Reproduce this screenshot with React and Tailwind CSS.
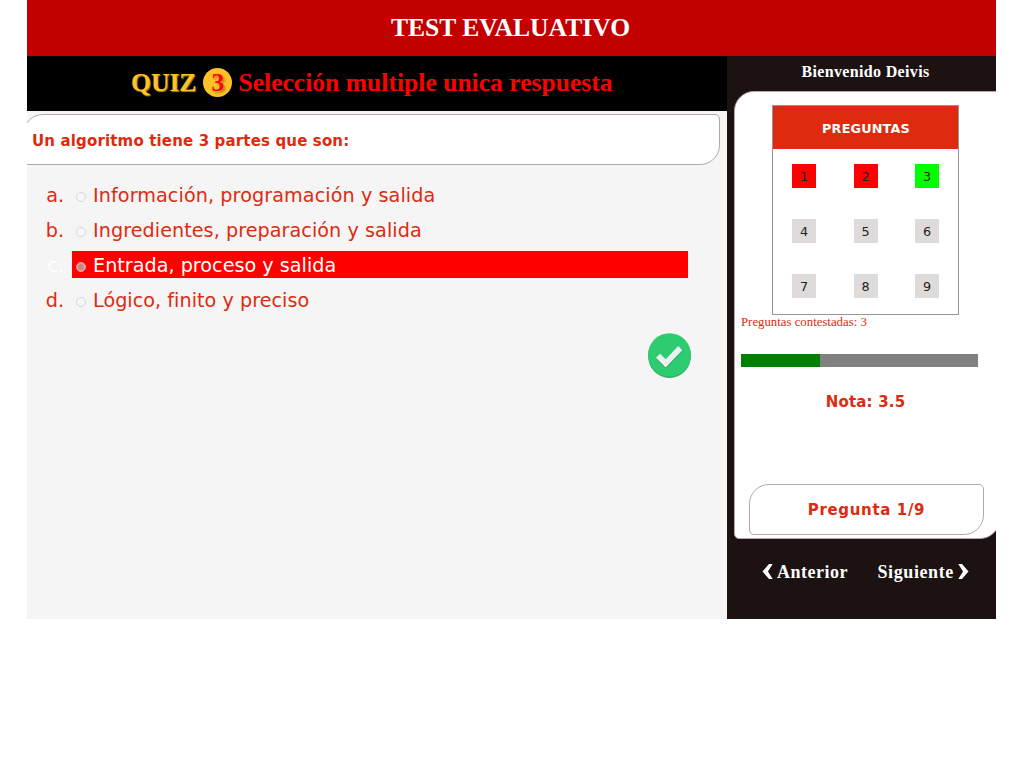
const serif = 'font-["Liberation_Serif",serif]';
const sans = 'font-["DejaVu_Sans",Verdana,sans-serif]';

const answers = [
  { letter: 'a', text: 'Información, programación y salida', spacing: 'tracking-[0.08px]' },
  { letter: 'b', text: 'Ingredientes, preparación y salida', spacing: 'tracking-[0.05px]' },
  { letter: 'c', text: 'Entrada, proceso y salida', spacing: 'tracking-[0.01px]', selected: true },
  { letter: 'd', text: 'Lógico, finito y preciso', spacing: 'tracking-[0.03px]' },
];

const questionColors = {
  1: 'bg-[#ff0000]',
  2: 'bg-[#ff0000]',
  3: 'bg-[#00ff00]',
};

function Answer({ letter, text, spacing, selected }) {
  return (
    <li className={`flex h-[27px] items-center text-[19.2px] whitespace-nowrap ${selected ? 'text-white' : 'text-[#de2b10]'}`}>
      <span className="w-[37px] pt-[3px] text-right font-normal">{letter}.</span>
      <label className={`ml-2 flex h-[27px] w-[616px] items-center pl-1 ${selected ? 'bg-[#ff0000]' : ''}`}>
        <svg className="mt-1 size-[10px] shrink-0" viewBox="0 0 10 10">
          <circle cx="5" cy="5" r="4.5" fill={selected ? '#e3a09f' : '#f7f7f7'} stroke={selected ? '#e3a09f' : '#d6d6d6'} />
          {selected && <circle cx="5" cy="5" r="3" fill="#cf8280" />}
        </svg>
        <span className={`ml-[7px] pt-[3px] ${spacing}`}>{text}</span>
      </label>
    </li>
  );
}

function CheckIcon() {
  return (
    <svg className="mt-5 ml-[621px] h-[45px] w-[43px]" viewBox="0 0 43 45">
      <ellipse cx="21.5" cy="23" rx="21.4" ry="21.9" fill="#27ae60" />
      <ellipse cx="21.5" cy="21.9" rx="21.4" ry="21.7" fill="#2ecc71" />
      <path d="M8 26L12 22.2L17.8 27.7L30.2 14.5L34.3 18.8L17.6 36Z" fill="#27ae60" />
      <path d="M8 24.7L12 20.8L17.8 26.3L30.2 13L34.3 17.3L17.6 34.5Z" fill="#ecf0f1" />
    </svg>
  );
}

function Sidebar() {
  return (
    <aside className="h-[563px] w-[269px] overflow-hidden bg-[#1c1211] pl-[7px]">
      <p className={`${serif} flex h-[35px] items-center justify-center text-base leading-[31px] font-bold text-white`}>
        <span className="-mt-[5px] mr-[-1px] tracking-[0.35px] whitespace-nowrap">Bienvenido Deivis</span>
      </p>
      <div className="flex h-[448px] w-[266px] flex-col rounded-tl-[20px] rounded-tr-[5px] rounded-br-[20px] rounded-bl-[5px] border border-[#b9a5a5] bg-white pt-[13px] pl-[6px]">
        <div className={`${sans} ml-[31px] h-[210px] w-[187px] border border-[#969696]`}>
          <h2 className="flex h-[43px] items-center justify-center bg-[#de2b10] pt-[3px] pl-px text-[12.8px] font-bold text-white">
            <span className="tracking-[0.15px]">PREGUNTAS</span>
          </h2>
          <div className="grid grid-cols-[24px_24px_24px] justify-start gap-x-[37.5px] gap-y-[31px] pt-[15px] pl-[19px]">
            {[1, 2, 3, 4, 5, 6, 7, 8, 9].map((n) => (
              <span key={n} className={`flex size-6 items-center justify-center pt-[2px] text-[12.8px] text-[#222] ${questionColors[n] || 'bg-[#dfdbdb]'}`}>
                {n}
              </span>
            ))}
          </div>
        </div>
        <p className={`${serif} h-[15px] text-[12.8px] leading-[15px] text-[#de2b10]`}>Preguntas contestadas: 3</p>
        <div className="mt-6 flex h-[13px] w-[237px] shrink-0 bg-[#808080]">
          <div className="w-[79px] bg-[#008000]" />
        </div>
        <p className={`${sans} mt-[25px] h-5 w-[249px] text-center text-[15px] leading-5 font-bold tracking-[0.2px] text-[#de2b10]`}>Nota: 3.5</p>
        <div className={`${sans} mt-[72px] ml-2 flex h-[51px] w-[235px] shrink-0 items-center justify-center rounded-tl-[20px] rounded-tr-[5px] rounded-br-[20px] rounded-bl-[5px] border border-[#b9a5a5] pt-[2px] text-[15px] font-bold tracking-[0.65px] text-[#de2b10]`}>
          Pregunta 1/9
        </div>
      </div>
      <nav className={`${serif} mt-[22px] flex h-[22px] items-center pl-7 text-[18px] font-bold text-white`}>
        <a className="flex items-center tracking-[0.5px]">
          <svg className="mt-[-2px] mr-1 h-[15px] w-[11px]" viewBox="0 0 11 15"><path d="M7 0H10.7L6 7.5L10.7 15H7L.5 7.5Z" fill="#fff" /></svg>
          Anterior
        </a>
        <a className="ml-[29.5px] flex items-center tracking-[0.6px]">
          Siguiente
          <svg className="mt-[-2px] ml-[4.5px] h-[15px] w-[11px]" viewBox="0 0 11 15"><path d="M4 0H.3L5 7.5L.3 15H4L10.5 7.5Z" fill="#fff" /></svg>
        </a>
      </nav>
    </aside>
  );
}

export default function App() {
  return (
    <div className="h-[768px] overflow-hidden bg-white">
      <div className="ml-[27px] w-[969px]">
        <header className="flex h-14 items-center justify-center bg-[#c20000] pr-[2px]">
          <h1 className={`${serif} text-[25.6px] font-bold whitespace-nowrap text-white`}>TEST EVALUATIVO</h1>
        </header>
        <div className="flex">
          <main className="h-[563px] w-[700px] overflow-hidden bg-[#f5f5f5]">
            <h2 className={`${serif} flex h-[55px] items-center bg-black pl-[104px] text-[25.6px] font-bold whitespace-nowrap text-[#ff0000]`}>
              <span className="text-[#ffc125] [text-shadow:1px_1px_1px_#b8861b]">QUIZ</span>
              <span className="-mt-[3px] ml-[7px] flex h-[29px] w-[29px] items-center justify-center rounded-full bg-[#ffc125] pt-[2px] [text-shadow:2px_2px_2px_#b8861b]">3</span>
              <span className="ml-[6px]">Selección multiple unica respuesta</span>
            </h2>
            <p className={`${sans} mt-[3px] -ml-[4px] flex h-[51px] w-[697px] items-center rounded-tl-[20px] rounded-tr-[5px] rounded-br-[20px] rounded-bl-[5px] border border-[#b9a5a5] bg-white pt-[4px] pl-[8px] text-[15px] font-bold tracking-[0.15px] text-[#de2b10]`}>
              Un algoritmo tiene 3 partes que son:
            </p>
            <ol className={`${sans} mt-4 flex flex-col gap-2`}>
              {answers.map((answer) => <Answer key={answer.letter} {...answer} />)}
            </ol>
            <CheckIcon />
          </main>
          <Sidebar />
        </div>
      </div>
    </div>
  );
}
